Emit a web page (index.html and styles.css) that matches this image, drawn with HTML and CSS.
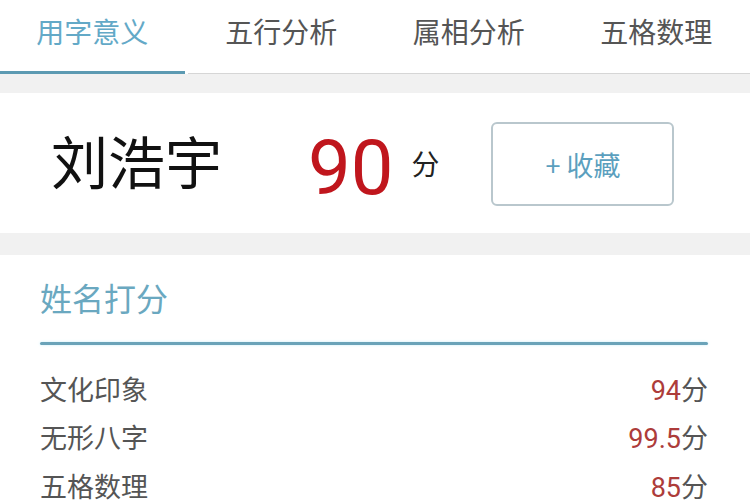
FILE: index.html
```html
<!DOCTYPE html>
<html lang="zh-CN">
<head>
<meta charset="utf-8">
<title>姓名打分</title>
<link rel="stylesheet" href="styles.css">
</head>
<body>
<nav class="tabs">
  <div class="tab active">用字意义</div>
  <div class="tab">五行分析</div>
  <div class="tab">属相分析</div>
  <div class="tab">五格数理</div>
</nav>
<div class="band"></div>
<section class="card">
  <div class="name">刘浩宇</div>
  <div class="score">90</div>
  <div class="unit">分</div>
  <button class="fav">+ 收藏</button>
</section>
<div class="band band-2"></div>
<section class="detail">
  <h2 class="title">姓名打分</h2>
  <div class="rule"></div>
  <ul class="rows">
    <li class="row"><span class="label">文化印象</span><span class="val"><b>94</b>分</span></li>
    <li class="row"><span class="label">无形八字</span><span class="val"><b>99.5</b>分</span></li>
    <li class="row"><span class="label">五格数理</span><span class="val"><b>85</b>分</span></li>
  </ul>
</section>
</body>
</html>
```

FILE: styles.css
```css
html, body {
  margin: 0;
  padding: 0;
  background: #ffffff;
  font-family: "Noto Sans CJK SC", "Noto Sans", sans-serif;
  overflow: hidden;
}

.tabs {
  display: grid;
  grid-template-columns: repeat(4, 1fr);
  height: 74px;
  background: #ffffff;
}

.tab {
  box-sizing: border-box;
  height: 74px;
  padding-top: 11px;
  text-align: center;
  font-size: 28px;
  line-height: 40px;
  color: #555555;
  border-bottom: 1px solid #d6d6d6;
}

.tab.active {
  color: #63a9c7;
  border-bottom: 3px solid #5c9ab2;
  margin-right: 3px;
}

.band {
  height: 19px;
  background: #f1f1f1;
}

.band-2 {
  height: 22px;
}

.card {
  display: flex;
  align-items: center;
  height: 140px;
  padding-left: 51px;
  background: #ffffff;
}

.name {
  font-size: 57px;
  line-height: 1;
  color: #111111;
  width: 171px;
  margin-bottom: 8px;
}

.score {
  font-family: Roboto, "Liberation Sans", sans-serif;
  font-size: 76px;
  line-height: 1;
  color: #c0161d;
  margin-left: 86px;
  margin-top: 10px;
}

.unit {
  font-size: 28px;
  line-height: 1;
  color: #222222;
  margin-left: 18px;
}

.fav {
  box-sizing: border-box;
  width: 183px;
  height: 84px;
  margin-left: 52px;
  margin-top: 2px;
  border: 2px solid #b9c7cd;
  border-radius: 6px;
  background: #ffffff;
  font-family: "Noto Sans CJK SC", "Noto Sans", sans-serif;
  font-size: 27px;
  color: #5b9fbe;
  padding: 0;
}

.detail {
  padding: 22px 42px 0 40px;
}

.title {
  margin: 0;
  font-weight: normal;
  font-size: 32px;
  line-height: 40px;
  color: #6aa8c0;
}

.rule {
  height: 3px;
  margin-top: 25px;
  background: #6aa3b9;
  border-radius: 2px;
  box-shadow: 0 0 3px #c9eefa;
}

.rows {
  list-style: none;
  margin: 0;
  padding: 19px 0 0;
}

.row {
  display: flex;
  justify-content: space-between;
  align-items: center;
  height: 48.5px;
  font-size: 27px;
  color: #555555;
}

.val b {
  font-weight: normal;
  font-family: Roboto, "Liberation Sans", sans-serif;
  color: #ad3c3a;
}
```
